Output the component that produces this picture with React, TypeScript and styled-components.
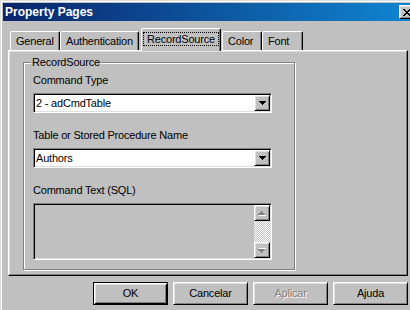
import React from "react";
import styled, { createGlobalStyle, css } from "styled-components";

const GlobalStyle = createGlobalStyle`
  html, body {
    margin: 0;
    padding: 0;
    background: #c0c0c0;
  }
  body {
    font-family: "Liberation Sans", Arial, sans-serif;
    font-size: 11px;
    letter-spacing: -0.2px;
    color: #000;
  }
`;

const raised = css`
  border: 1px solid;
  border-color: #fff #000 #000 #fff;
  box-shadow: inset 1px 1px #dfdfdf, inset -1px -1px #808080;
`;

const sunken = css`
  border: 1px solid;
  border-color: #808080 #fff #fff #808080;
  box-shadow: inset 1px 1px #000, inset -1px -1px #dfdfdf;
`;

const Window = styled.div`
  box-sizing: border-box;
  width: 410px;
  height: 310px;
  overflow: hidden;
  background: #c0c0c0;
  border-top: 1px solid #dfdfdf;
  border-left: 1px solid #dfdfdf;
  box-shadow: inset 1px 1px #fff;
  padding: 2px 0 0 2px;
  display: flex;
  flex-direction: column;
`;

const TitleBar = styled.div`
  height: 18px;
  flex: none;
  display: flex;
  align-items: center;
  justify-content: space-between;
  padding-left: 2px;
  background: linear-gradient(to right, #0a246a, #1084d0);
  color: #fff;
`;

const Title = styled.span`
  font-weight: bold;
  font-size: 12px;
  letter-spacing: 0;
`;

const CloseButton = styled.div`
  box-sizing: border-box;
  width: 16px;
  height: 14px;
  margin-right: -5px;
  background: #c0c0c0;
  ${raised};
  display: flex;
  align-items: center;
  justify-content: center;
  padding-right: 1px;
`;

const Body = styled.div`
  flex: 1;
  display: flex;
  flex-direction: column;
  padding: 7px 2px 0 5px;
`;

const TabStrip = styled.div`
  height: 22px;
  display: flex;
  align-items: flex-end;
  padding-left: 2px;
`;

const Tab = styled.div<{ $w: number; $active?: boolean }>`
  box-sizing: border-box;
  width: ${(p) => p.$w}px;
  height: ${(p) => (p.$active ? 23 : 19)}px;
  margin: ${(p) => (p.$active ? "0 1px -1px 2px" : "0")};
  padding: ${(p) => (p.$active ? "3px 1px 0 1px" : "3px 0 0 5px")};
  border-top: 1px solid #fff;
  border-left: 1px solid #fff;
  border-right: 1px solid #000;
  border-radius: 2px 2px 0 0;
  box-shadow: inset -1px 0 #808080;
  background: #c0c0c0;
  position: relative;
  z-index: ${(p) => (p.$active ? 1 : 0)};
  line-height: 13px;
  white-space: nowrap;
`;

const FocusBox = styled.div`
  border: 1px dotted #000;
  line-height: 12px;
  padding: 0 2px;
  text-align: center;
`;

const Panel = styled.div`
  box-sizing: border-box;
  width: 400px;
  height: 226px;
  border: 1px solid;
  border-color: #fff #000 #000 #fff;
  box-shadow: inset -1px -1px #808080, inset 1px 1px #dfdfdf;
  padding: 11px 0 0 14px;
`;

const Group = styled.div`
  position: relative;
  box-sizing: border-box;
  width: 272px;
  height: 208px;
  border: 1px solid #808080;
  box-shadow: inset 1px 1px #fff, 1px 1px #fff;
  padding: 11px 22px 0 9px;
  display: flex;
  flex-direction: column;
  gap: 16px;
`;

const Legend = styled.span`
  position: absolute;
  top: -7px;
  left: 7px;
  padding: 0 1px;
  background: #c0c0c0;
  line-height: 13px;
`;

const Field = styled.div`
  display: flex;
  flex-direction: column;
`;

const FieldLabel = styled.label`
  line-height: 13px;
  margin-bottom: 6px;
`;

const Combo = styled.div`
  box-sizing: border-box;
  height: 20px;
  display: flex;
  padding: 1px;
  background: #fff;
  ${sunken};
`;

const ComboValue = styled.div`
  flex: 1;
  padding-left: 1px;
  line-height: 16px;
  white-space: nowrap;
`;

const ArrowButton = styled.div`
  box-sizing: border-box;
  width: 16px;
  height: 16px;
  flex: none;
  background: #c0c0c0;
  ${raised};
  display: flex;
  align-items: center;
  justify-content: center;
`;

const TextBox = styled.div`
  box-sizing: border-box;
  height: 57px;
  display: flex;
  justify-content: flex-end;
  padding: 1px;
  background: #c0c0c0;
  ${sunken};
`;

const ScrollBar = styled.div`
  width: 16px;
  display: flex;
  flex-direction: column;
`;

const ScrollTrack = styled.div`
  flex: 1;
  background: repeating-conic-gradient(#fff 0 25%, #c0c0c0 0 50%) 0 0 / 2px 2px;
`;

const ButtonRow = styled.div`
  display: flex;
  justify-content: flex-end;
  gap: 5px;
  margin-top: 6px;
`;

const PushButton = styled.button<{ $default?: boolean }>`
  box-sizing: border-box;
  width: 75px;
  height: 23px;
  padding: 0 0 1px;
  font-family: "Liberation Sans", Arial, sans-serif;
  font-size: 11px;
  letter-spacing: -0.2px;
  color: #000;
  background: #c0c0c0;
  ${raised};
  ${(p) =>
    p.$default &&
    css`
      border: 1px solid #000;
      box-shadow: inset 1px 1px #fff, inset -1px -1px #000,
        inset 2px 2px #dfdfdf, inset -2px -2px #808080;
    `}
  &:disabled {
    color: #808080;
    text-shadow: 1px 1px #fff;
  }
`;

const DownArrow = ({ color = "#000" }: { color?: string }) => (
  <svg width="7" height="4" viewBox="0 0 7 4">
    <path d="M0 0h7v1h-1v1h-1v1h-1v1h-1v-1h-1v-1h-1v-1h-1z" fill={color} />
  </svg>
);

const GreyArrow = ({ up }: { up?: boolean }) => (
  <svg width="8" height="5" viewBox="0 0 8 5" style={up ? undefined : { transform: "scaleY(-1)" }}>
    <path d="M4 1h1v1h1v1h1v1h1v1h-7v-1h1z" fill="#fff" />
    <path d="M3 0h1v1h1v1h1v1h1v1h-7v-1h1v-1h1z" fill="#808080" />
  </svg>
);

export default function App() {
  return (
    <>
      <GlobalStyle />
      <Window>
        <TitleBar>
          <Title>Property Pages</Title>
          <CloseButton>
            <svg width="8" height="7" viewBox="0 0 8 7">
              <path
                d="M0 0h2v1h1v1h2v-1h1v-1h2v1h-1v1h-1v1h-1v1h1v1h1v1h1v1h-2v-1h-1v-1h-2v1h-1v1h-2v-1h1v-1h1v-1h1v-1h-1v-1h-1v-1h-1z"
                fill="#000"
              />
            </svg>
          </CloseButton>
        </TitleBar>
        <Body>
          <TabStrip>
            <Tab $w={50}>General</Tab>
            <Tab $w={79}>Authentication</Tab>
            <Tab $w={80} $active>
              <FocusBox>RecordSource</FocusBox>
            </Tab>
            <Tab $w={40}>Color</Tab>
            <Tab $w={41}>Font</Tab>
          </TabStrip>
          <Panel>
            <Group>
              <Legend>RecordSource</Legend>
              <Field>
                <FieldLabel>Command Type</FieldLabel>
                <Combo>
                  <ComboValue>2 - adCmdTable</ComboValue>
                  <ArrowButton>
                    <DownArrow />
                  </ArrowButton>
                </Combo>
              </Field>
              <Field>
                <FieldLabel>Table or Stored Procedure Name</FieldLabel>
                <Combo>
                  <ComboValue>Authors</ComboValue>
                  <ArrowButton>
                    <DownArrow />
                  </ArrowButton>
                </Combo>
              </Field>
              <Field>
                <FieldLabel>Command Text (SQL)</FieldLabel>
                <TextBox>
                  <ScrollBar>
                    <ArrowButton>
                      <GreyArrow up />
                    </ArrowButton>
                    <ScrollTrack />
                    <ArrowButton>
                      <GreyArrow />
                    </ArrowButton>
                  </ScrollBar>
                </TextBox>
              </Field>
            </Group>
          </Panel>
          <ButtonRow>
            <PushButton $default>OK</PushButton>
            <PushButton>Cancelar</PushButton>
            <PushButton disabled>Aplicar</PushButton>
            <PushButton>Ajuda</PushButton>
          </ButtonRow>
        </Body>
      </Window>
    </>
  );
}
